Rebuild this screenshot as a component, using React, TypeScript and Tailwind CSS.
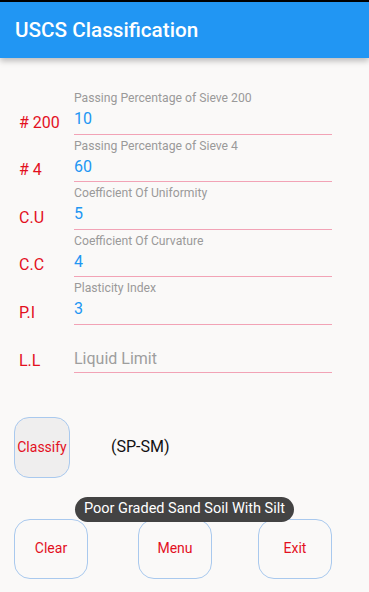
import React from "react";

const rows = [
  { tag: "# 200", label: "Passing Percentage of Sieve 200", value: "10" },
  { tag: "# 4", label: "Passing Percentage of Sieve 4", value: "60" },
  { tag: "C.U", label: "Coefficient Of Uniformity", value: "5" },
  { tag: "C.C", label: "Coefficient Of Curvature", value: "4" },
  { tag: "P.I", label: "Plasticity Index", value: "3" },
  { tag: "L.L", label: "", value: "", placeholder: "Liquid Limit" },
];

export default function App() {
  return (
    <div
      className="relative w-[369px] h-[592px] overflow-hidden bg-[#faf9f8] flex flex-col"
      style={{ fontFamily: "Roboto, 'Noto Sans', sans-serif" }}
    >
      <div className="h-[2px] bg-black" />
      <div className="h-[56px] bg-[#2196f3] flex items-center pl-[15px] shadow-[0_3px_6px_rgba(0,0,0,0.25)] z-10">
        <span className="text-white text-[20.7px] font-medium leading-none">USCS Classification</span>
      </div>

      <div className="flex flex-col pt-[29px]">
        {rows.map((r) => (
          <div key={r.tag} className="flex h-[47.6px]">
            <div className="w-[74px] pl-[19px] flex items-end pb-[3px]">
              <span className="text-[#e3101e] text-[16px] leading-[19px]">{r.tag}</span>
            </div>
            <div className="w-[258px] flex flex-col border-b border-[#f2a3b6]">
              <span className="pt-[4px] text-[12.2px] leading-[14px] text-[#9a9a9a] h-[19px]">{r.label}</span>
              <span
                className={
                  "text-[16px] leading-[19px] " +
                  (r.placeholder ? "mt-[5px] text-[#9e9e9e]" : "mt-[3px] text-[#2196f3]")
                }
              >
                {r.value || r.placeholder}
              </span>
            </div>
          </div>
        ))}
      </div>

      <div className="flex items-center mt-[44px] pl-[14px]">
        <div className="w-[56px] h-[61px] rounded-[15px] border border-[#a9c9ee] bg-[#efeeee] flex items-center justify-center">
          <span className="text-[#e3101e] text-[14px]">Classify</span>
        </div>
        <span className="ml-[41px] text-[16px] text-[#111]">(SP-SM)</span>
      </div>

      <div className="flex mt-[41px] pl-[14px]">
        <div className="w-[74px] h-[60px] rounded-[16px] border border-[#a9c9ee] flex items-center justify-center">
          <span className="text-[#e3101e] text-[14px]">Clear</span>
        </div>
        <div className="ml-[50px] w-[74px] h-[60px] rounded-[16px] border border-[#a9c9ee] flex items-center justify-center">
          <span className="text-[#e3101e] text-[14px]">Menu</span>
        </div>
        <div className="ml-[46px] w-[74px] h-[60px] rounded-[16px] border border-[#a9c9ee] flex items-center justify-center">
          <span className="text-[#e3101e] text-[14px]">Exit</span>
        </div>
      </div>

      <div className="absolute left-[75px] top-[497px] w-[219px] h-[25px] rounded-full bg-[#434343] flex items-center justify-center">
        <span className="text-white text-[14.5px] leading-none">Poor Graded Sand Soil With Silt</span>
      </div>
    </div>
  );
}
